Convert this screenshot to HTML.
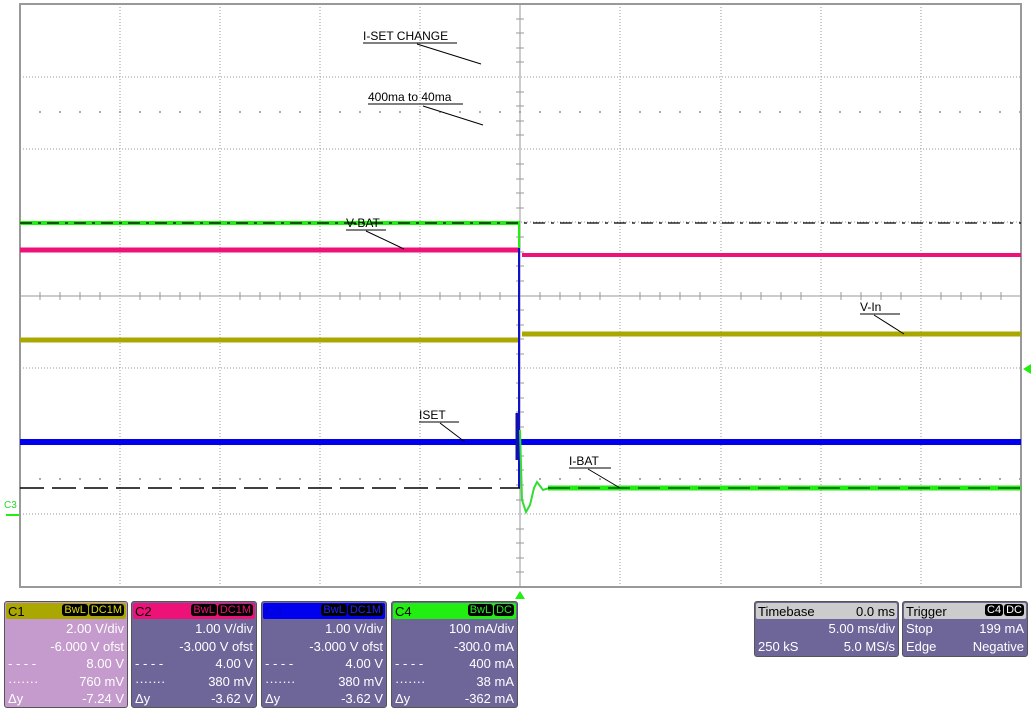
<!DOCTYPE html>
<html><head><meta charset="utf-8"><style>
body{margin:0;background:#fff;width:1031px;height:709px;overflow:hidden;font-family:"Liberation Sans",sans-serif}
.p{position:absolute;border:1px solid #555;border-radius:3px;background:#6e6599;color:#fff;font-size:13px;line-height:17px;box-sizing:border-box}
.h{height:16px;margin:1px;border-radius:2px;color:#000;padding-left:2px;position:relative}
.r{position:relative;height:17.5px;padding:0 3px}
.r .l{position:absolute;left:3px}.r .v{position:absolute;right:3px}
.tag{position:absolute;right:2px;top:1px;font-size:11px;line-height:13px}
.tag span{background:#000;border-radius:3px;padding:0 2px;margin-left:1px}
</style></head><body>
<svg width="1031" height="600" style="position:absolute;left:0;top:0" font-family="Liberation Sans" font-size="12">
<g stroke="#999" stroke-width="1" stroke-dasharray="1,2">
<line x1="120" y1="4" x2="120" y2="587"/><line x1="220" y1="4" x2="220" y2="587"/><line x1="320" y1="4" x2="320" y2="587"/><line x1="420" y1="4" x2="420" y2="587"/><line x1="620" y1="4" x2="620" y2="587"/><line x1="721" y1="4" x2="721" y2="587"/><line x1="821" y1="4" x2="821" y2="587"/><line x1="921" y1="4" x2="921" y2="587"/>
<line x1="20" y1="77" x2="1021" y2="77"/><line x1="20" y1="149" x2="1021" y2="149"/><line x1="20" y1="222" x2="1021" y2="222"/><line x1="20" y1="368" x2="1021" y2="368"/><line x1="20" y1="441" x2="1021" y2="441"/><line x1="20" y1="514" x2="1021" y2="514"/>
</g>
<g stroke="#aaa" stroke-width="2" stroke-dasharray="2,18">
<line x1="39" y1="112" x2="1021" y2="112"/><line x1="39" y1="479" x2="1021" y2="479"/>
</g>
<line x1="20" y1="296" x2="1021" y2="296" stroke="#999"/>
<line x1="520" y1="4" x2="520" y2="587" stroke="#999"/>
<g stroke="#999"><path d="M40 292v8M60 292v8M80 292v8M100 292v8M140 292v8M160 292v8M180 292v8M200 292v8M240 292v8M260 292v8M280 292v8M300 292v8M340 292v8M360 292v8M380 292v8M400 292v8M440 292v8M460 292v8M480 292v8M500 292v8M540 292v8M560 292v8M580 292v8M600 292v8M640 292v8M660 292v8M680 292v8M700 292v8M741 292v8M761 292v8M781 292v8M801 292v8M841 292v8M861 292v8M881 292v8M901 292v8M941 292v8M961 292v8M981 292v8M1001 292v8"/>
<path d="M516 19h8M516 33h8M516 48h8M516 62h8M516 92h8M516 106h8M516 121h8M516 135h8M516 164h8M516 179h8M516 193h8M516 208h8M516 237h8M516 252h8M516 266h8M516 281h8M516 310h8M516 325h8M516 339h8M516 354h8M516 383h8M516 398h8M516 412h8M516 427h8M516 456h8M516 470h8M516 485h8M516 500h8M516 529h8M516 543h8M516 558h8M516 572h8"/></g>
<rect x="20" y="4" width="1001" height="583" fill="none" stroke="#999" stroke-width="2"/>
<line x1="20" y1="223" x2="520" y2="223" stroke="#22ee11" stroke-width="4"/>
<line x1="20" y1="223" x2="1021" y2="223" stroke="#000" stroke-width="1.2" stroke-dasharray="12,6,3,6"/>
<line x1="20" y1="250" x2="518" y2="250" stroke="#ee1177" stroke-width="5"/>
<line x1="522" y1="255" x2="1021" y2="255" stroke="#ee1177" stroke-width="4"/>
<line x1="20" y1="340" x2="518" y2="340" stroke="#aaa800" stroke-width="5"/>
<line x1="522" y1="334" x2="1021" y2="334" stroke="#aaa800" stroke-width="5"/>
<line x1="519" y1="223" x2="519" y2="250" stroke="#22ee11" stroke-width="2"/>
<line x1="519" y1="248" x2="519" y2="488" stroke="#1111cc" stroke-width="2"/>
<line x1="20" y1="442" x2="1021" y2="442" stroke="#0000ee" stroke-width="6"/>
<line x1="517" y1="413" x2="517" y2="460" stroke="#1111aa" stroke-width="3"/>
<line x1="20" y1="488" x2="520" y2="488" stroke="#000" stroke-width="1.5" stroke-dasharray="24,8"/>
<path d="M520 430 L522 500 L526 512 L530 505 L534 488 L537 482 L540 486 L543 490 L546 489 L550 488 L1021 488" fill="none" stroke="#33dd33" stroke-width="2"/>
<line x1="548" y1="488" x2="1021" y2="488" stroke="#22ee11" stroke-width="5"/>
<line x1="548" y1="488" x2="1021" y2="488" stroke="#000" stroke-width="1" stroke-dasharray="22,8"/>
<g fill="#000"><text x="363" y="40">I-SET CHANGE</text><text x="368" y="101">400ma to 40ma</text><text x="346" y="227">V-BAT</text><text x="860" y="311">V-In</text><text x="419" y="419">ISET</text><text x="569" y="465">I-BAT</text></g>
<g stroke="#000" stroke-width="1"><path d="M363 43h94M417 44l64 20M368 104h95M423 106l60 19M346 230h40M366 231l38 18M860 314h40M874 315l30 19M419 422h40M440 423l25 19M569 468h42M588 469l32 19"/></g>
<text x="4" y="508" fill="#22dd22" font-size="10">C3</text><line x1="6" y1="515" x2="19" y2="515" stroke="#22ee11" stroke-width="2"/>
<path d="M1031 364 L1023 369 L1031 374Z" fill="#22ee11"/>
<path d="M520 591 L515 599 L525 599Z" fill="#22ee11"/>
</svg>
<div class="p" style="left:4px;top:601px;width:124px;height:107px;background:#c49bcc"><div class="h" style="background:#aaa800">C1<div class="tag"><span style="color:#dd0">BwL</span><span style="color:#dd0">DC1M</span></div></div>
<div class="r"><span class="v">2.00 V/div</span></div><div class="r"><span class="v">-6.000 V ofst</span></div><div class="r"><span class="l">- - - -</span><span class="v">8.00 V</span></div><div class="r"><span class="l">·······</span><span class="v">760 mV</span></div><div class="r"><span class="l">Δy</span><span class="v">-7.24 V</span></div></div>
<div class="p" style="left:131px;top:601px;width:126px;height:107px"><div class="h" style="background:#ee1177">C2<div class="tag"><span style="color:#ee1177">BwL</span><span style="color:#ee1177">DC1M</span></div></div>
<div class="r"><span class="v">1.00 V/div</span></div><div class="r"><span class="v">-3.000 V ofst</span></div><div class="r"><span class="l">- - - -</span><span class="v">4.00 V</span></div><div class="r"><span class="l">·······</span><span class="v">380 mV</span></div><div class="r"><span class="l">Δy</span><span class="v">-3.62 V</span></div></div>
<div class="p" style="left:261px;top:601px;width:126px;height:107px"><div class="h" style="background:#0000ee;color:#00c">C3<div class="tag"><span style="color:#22f">BwL</span><span style="color:#22f">DC1M</span></div></div>
<div class="r"><span class="v">1.00 V/div</span></div><div class="r"><span class="v">-3.000 V ofst</span></div><div class="r"><span class="l">- - - -</span><span class="v">4.00 V</span></div><div class="r"><span class="l">·······</span><span class="v">380 mV</span></div><div class="r"><span class="l">Δy</span><span class="v">-3.62 V</span></div></div>
<div class="p" style="left:391px;top:601px;width:127px;height:107px"><div class="h" style="background:#22ee11">C4<div class="tag"><span style="color:#2e2">BwL</span><span style="color:#2e2">DC</span></div></div>
<div class="r"><span class="v">100 mA/div</span></div><div class="r"><span class="v">-300.0 mA</span></div><div class="r"><span class="l">- - - -</span><span class="v">400 mA</span></div><div class="r"><span class="l">·······</span><span class="v">38 mA</span></div><div class="r"><span class="l">Δy</span><span class="v">-362 mA</span></div></div>
<div class="p" style="left:754px;top:601px;width:145px;height:56px"><div class="h" style="background:#ccc">Timebase<span style="position:absolute;right:2px">0.0 ms</span></div>
<div class="r"><span class="v">5.00 ms/div</span></div><div class="r"><span class="l">250 kS</span><span class="v">5.0 MS/s</span></div></div>
<div class="p" style="left:902px;top:601px;width:126px;height:56px"><div class="h" style="background:#ccc">Trigger<div class="tag"><span style="color:#fff">C4</span><span style="color:#fff">DC</span></div></div>
<div class="r"><span class="l">Stop</span><span class="v">199 mA</span></div><div class="r"><span class="l">Edge</span><span class="v">Negative</span></div></div>
</body></html>
